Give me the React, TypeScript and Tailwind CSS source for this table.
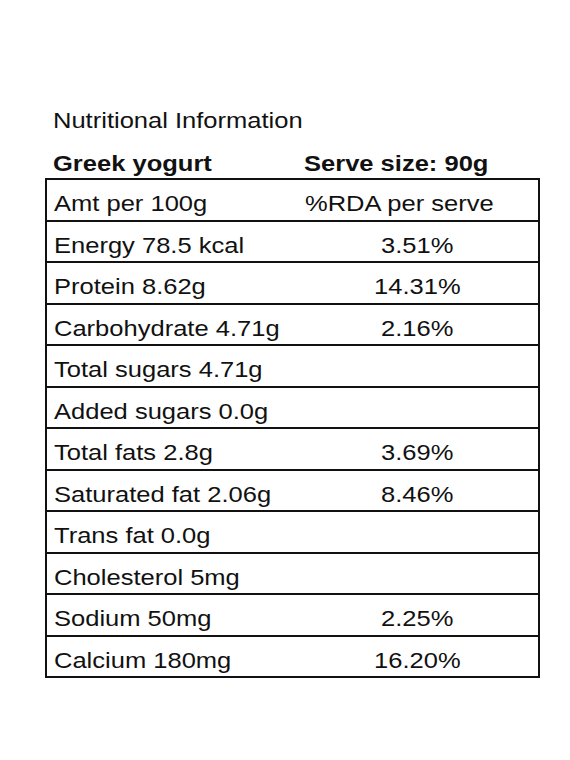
import React from "react";

const rows: [string, string][] = [
  ["Energy 78.5 kcal", "3.51%"],
  ["Protein 8.62g", "14.31%"],
  ["Carbohydrate 4.71g", "2.16%"],
  ["Total sugars 4.71g", ""],
  ["Added sugars 0.0g", ""],
  ["Total fats 2.8g", "3.69%"],
  ["Saturated fat 2.06g", "8.46%"],
  ["Trans fat 0.0g", ""],
  ["Cholesterol 5mg", ""],
  ["Sodium 50mg", "2.25%"],
  ["Calcium 180mg", "16.20%"],
];

function T({ children, center }: { children: React.ReactNode; center?: boolean }) {
  return (
    <span className={`inline-block whitespace-nowrap scale-x-[1.16] ${center ? "origin-center" : "origin-left"}`}>
      {children}
    </span>
  );
}

export default function App() {
  return (
    <div className="w-[570px] h-[760px] bg-white text-[#111] font-['Liberation_Sans',Arial,sans-serif] text-[22px] leading-[25px]">
      <div className="pt-[108px] pl-[45px] w-[540px]">
        <div className="pl-[8px]">
          <T>Nutritional Information</T>
        </div>
        <div className="flex mt-[18px] font-bold">
          <div className="w-[259px] pl-[8px]">
            <T>Greek yogurt</T>
          </div>
          <div>
            <T>Serve size: 90g</T>
          </div>
        </div>
        <div className="mt-[2px] w-[495px] border-2 border-[#111]">
          <div className="flex h-[39.5px] pt-[11px]">
            <div className="w-[249px] pl-[7px]">
              <T>Amt per 100g</T>
            </div>
            <div className="flex-1 pl-[9px]">
              <T>%RDA per serve</T>
            </div>
          </div>
          {rows.map(([a, b]) => (
            <div key={a} className="flex h-[41.5px] pt-[11px] border-t-2 border-[#111]">
              <div className="w-[249px] pl-[7px]">
                <T>{a}</T>
              </div>
              <div className="flex-1 text-center">
                {b && <T center>{b}</T>}
              </div>
            </div>
          ))}
        </div>
      </div>
    </div>
  );
}
